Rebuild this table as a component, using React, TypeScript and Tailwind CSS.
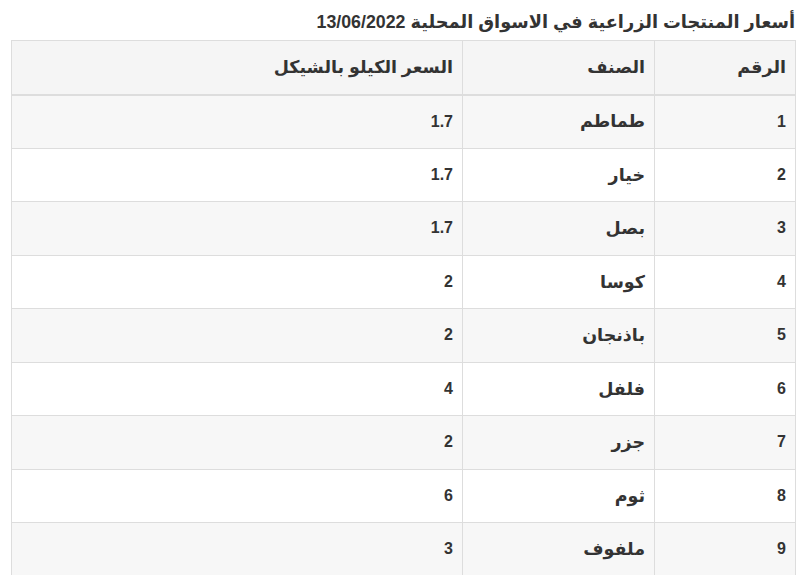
const rows = [
  { id: "1", name: "طماطم", price: "1.7" },
  { id: "2", name: "خيار", price: "1.7" },
  { id: "3", name: "بصل", price: "1.7" },
  { id: "4", name: "كوسا", price: "2" },
  { id: "5", name: "باذنجان", price: "2" },
  { id: "6", name: "فلفل", price: "4" },
  { id: "7", name: "جزر", price: "2" },
  { id: "8", name: "ثوم", price: "6" },
  { id: "9", name: "ملفوف", price: "3" },
];

export default function App() {
  return (
    <div
      dir="rtl"
      className="min-h-screen bg-white pr-[11px] pl-[11px] pt-[10px] text-[#333] font-['Liberation_Sans','DejaVu_Sans',sans-serif]"
    >
      <h1 className="mb-[5px] pr-px text-[17.8px] font-bold leading-[25px]">
        أسعار المنتجات الزراعية في الاسواق المحلية 13/06/2022
      </h1>
      <table className="w-full border-collapse text-[16px] font-bold">
        <thead>
          <tr className="h-[54px] bg-[#f5f5f5]">
            <th className="w-[141px] border border-b-2 border-[#ddd] px-[9px] text-right text-[17.5px] font-bold">
              الرقم
            </th>
            <th className="w-[192px] border border-b-2 border-[#ddd] px-[9px] text-right text-[17.5px] font-bold">
              الصنف
            </th>
            <th className="border border-b-2 border-[#ddd] px-[9px] text-right text-[17.5px] font-bold">
              السعر الكيلو بالشيكل
            </th>
          </tr>
        </thead>
        <tbody>
          {rows.map((r, i) => (
            <tr
              key={r.id}
              className={i % 2 === 0 ? "h-[53.5px] bg-[#f7f7f7]" : "h-[53.5px] bg-white"}
            >
              <td className="border border-[#ddd] px-[9px]">{r.id}</td>
              <td className="border border-[#ddd] px-[9px] text-[17.5px]">{r.name}</td>
              <td className="border border-[#ddd] px-[9px]">{r.price}</td>
            </tr>
          ))}
        </tbody>
      </table>
    </div>
  );
}
